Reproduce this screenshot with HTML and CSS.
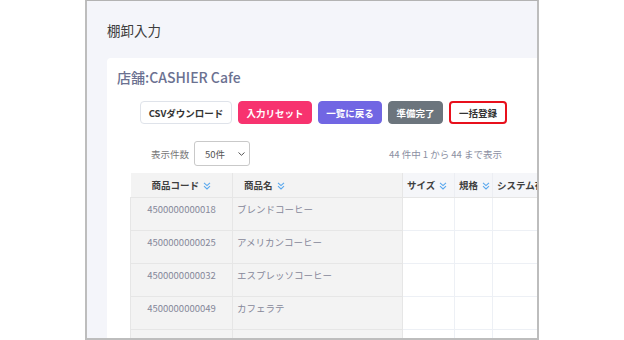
FILE: index.html
```html
<!DOCTYPE html>
<html lang="ja">
<head>
<meta charset="utf-8">
<link rel="stylesheet" href="styles.css">
</head>
<body>
<div class="frame">
  <div class="page">
    <h1 class="title">棚卸入力</h1>
    <div class="card">
      <h2 class="store">店舗:CASHIER Cafe</h2>
      <div class="actions">
        <button class="btn btn-outline">CSVダウンロード</button>
        <button class="btn btn-pink">入力リセット</button>
        <button class="btn btn-purple">一覧に戻る</button>
        <button class="btn btn-gray">準備完了</button>
        <button class="btn btn-highlight">一括登録</button>
      </div>
      <div class="listbar">
        <div class="per-page">
          <span class="per-label">表示件数</span>
          <span class="select">50件<svg class="sel-chev" width="7" height="4" viewBox="0 0 7 4"><path d="M0.5 0.5 L3.5 3.3 L6.5 0.5" fill="none" stroke="#555" stroke-width="1"/></svg></span>
        </div>
        <span class="info">44 件中 1 から 44 まで表示</span>
      </div>
      <table class="grid">
        <colgroup>
          <col class="c-code"><col class="c-name"><col class="c-size"><col class="c-spec"><col class="c-sys">
        </colgroup>
        <thead>
          <tr>
            <th class="fixed center">商品コード<svg class="sort" width="8" height="8" viewBox="0 0 8 8"><path d="M1 0.8 L4 3.6 L7 0.8 M1 4.2 L4 7 L7 4.2" fill="none" stroke="#5aa8ee" stroke-width="1.1"/></svg></th>
            <th class="fixed name-h">商品名<svg class="sort" width="8" height="8" viewBox="0 0 8 8"><path d="M1 0.8 L4 3.6 L7 0.8 M1 4.2 L4 7 L7 4.2" fill="none" stroke="#5aa8ee" stroke-width="1.1"/></svg></th>
            <th class="free">サイズ<svg class="sort" width="8" height="8" viewBox="0 0 8 8"><path d="M1 0.8 L4 3.6 L7 0.8 M1 4.2 L4 7 L7 4.2" fill="none" stroke="#5aa8ee" stroke-width="1.1"/></svg></th>
            <th class="free">規格<svg class="sort" width="8" height="8" viewBox="0 0 8 8"><path d="M1 0.8 L4 3.6 L7 0.8 M1 4.2 L4 7 L7 4.2" fill="none" stroke="#5aa8ee" stroke-width="1.1"/></svg></th>
            <th class="free">システム在庫</th>
          </tr>
        </thead>
        <tbody>
          <tr><td class="fixed center">4500000000018</td><td class="fixed">ブレンドコーヒー</td><td></td><td></td><td></td></tr>
          <tr><td class="fixed center">4500000000025</td><td class="fixed">アメリカンコーヒー</td><td></td><td></td><td></td></tr>
          <tr><td class="fixed center">4500000000032</td><td class="fixed">エスプレッソコーヒー</td><td></td><td></td><td></td></tr>
          <tr><td class="fixed center">4500000000049</td><td class="fixed">カフェラテ</td><td></td><td></td><td></td></tr>
          <tr><td class="fixed center">4500000000056</td><td class="fixed">ラテ</td><td></td><td></td><td></td></tr>
        </tbody>
      </table>
    </div>
  </div>
</div>
</body>
</html>
```

FILE: styles.css
```css
html, body {
  margin: 0;
  padding: 0;
  background: #ffffff;
}

body {
  font-family: "Noto Sans CJK JP", "Noto Sans", sans-serif;
  color: #333;
}

.frame {
  box-sizing: border-box;
  margin-left: 85px;
  width: 454px;
  height: 340px;
  border: 2px solid #bdbdbd;
  border-top: 1px solid #b3b3b3;
  background: #f4f5fa;
  overflow: hidden;
}

.page {
  padding-left: 20px;
}

.title {
  box-sizing: border-box;
  margin: 0;
  height: 57px;
  padding-top: 21px;
  font-size: 13.5px;
  line-height: 16px;
  font-weight: 400;
  color: #3d3d3d;
}

.card {
  width: 560px;
  height: 300px;
  background: #fff;
  border-radius: 4px 0 0 0;
  padding: 9px 0 0 10px;
  box-sizing: border-box;
}

.store {
  margin: 0;
  font-size: 14px;
  line-height: 20px;
  font-weight: 500;
  color: #6b7191;
}

.actions {
  display: flex;
  gap: 6px;
  margin: 14px 0 0 23px;
}

.btn {
  box-sizing: border-box;
  height: 23px;
  padding: 0;
  display: flex;
  align-items: center;
  justify-content: center;
  border: 1px solid transparent;
  border-radius: 4px;
  font-family: inherit;
  font-size: 9.5px;
  font-weight: 700;
  color: #fff;
  white-space: nowrap;
}

.btn-outline {
  width: 92px;
  background: #fff;
  border-color: #dfe3ea;
  color: #333;
}

.btn-pink {
  width: 74px;
  background: #f7336f;
  border-color: #f7336f;
}

.btn-purple {
  width: 64px;
  background: #7166e3;
  border-color: #7166e3;
}

.btn-gray {
  width: 55px;
  background: #6c757d;
  border-color: #6c757d;
}

.btn-highlight {
  width: 58px;
  background: #fff;
  border: 2px solid #e8101c;
  color: #333;
}

.listbar {
  display: flex;
  align-items: center;
  justify-content: space-between;
  width: 366px;
  margin: 17px 0 0 23px;
  padding: 0 4px 0 11px;
  box-sizing: border-box;
}

.per-page {
  display: flex;
  align-items: center;
  gap: 5px;
}

.per-label {
  font-size: 9.5px;
  color: #777;
}

.select {
  box-sizing: border-box;
  display: flex;
  align-items: center;
  justify-content: space-between;
  width: 56px;
  height: 25px;
  padding: 0 4px 0 10px;
  border: 1px solid #c9c9c9;
  border-radius: 3px;
  font-size: 9.5px;
  color: #555;
}

.info {
  font-size: 9.5px;
  color: #8b8fa2;
}

.grid {
  margin: 7px 0 0 13px;
  border-collapse: collapse;
  table-layout: fixed;
  width: 462px;
}

.c-code { width: 102px; }
.c-name { width: 170px; }
.c-size { width: 52px; }
.c-spec { width: 38px; }
.c-sys { width: 100px; }

.grid th {
  height: 24px;
  padding: 0;
  font-size: 9.5px;
  font-weight: 700;
  color: #3f3f3f;
  text-align: left;
  white-space: nowrap;
  border-bottom: 1px solid #e6e6e6;
}

.grid th.fixed {
  background: #f3f3f3;
  border-right: 1px solid #e6e6e6;
}

.grid th.center {
  text-align: center;
}

.grid th.name-h {
  padding-left: 11px;
}

.grid th.free {
  background: #f5f6f9;
  padding-left: 4px;
  border-left: 1px solid #eceef3;
}

.sort {
  margin-left: 4px;
  vertical-align: -0.5px;
}

.grid td {
  height: 33px;
  padding: 4px 0 0 4px;
  vertical-align: top;
  box-sizing: border-box;
  font-size: 9.5px;
  line-height: 14px;
  color: #86889a;
  border: 1px solid #edf0f5;
  border-top: 0;
  background: #fff;
}

.grid td.fixed {
  background: #f3f3f3;
  border-color: #e6e6e6;
}

.grid td.center {
  text-align: center;
  padding-left: 0;
}
```
